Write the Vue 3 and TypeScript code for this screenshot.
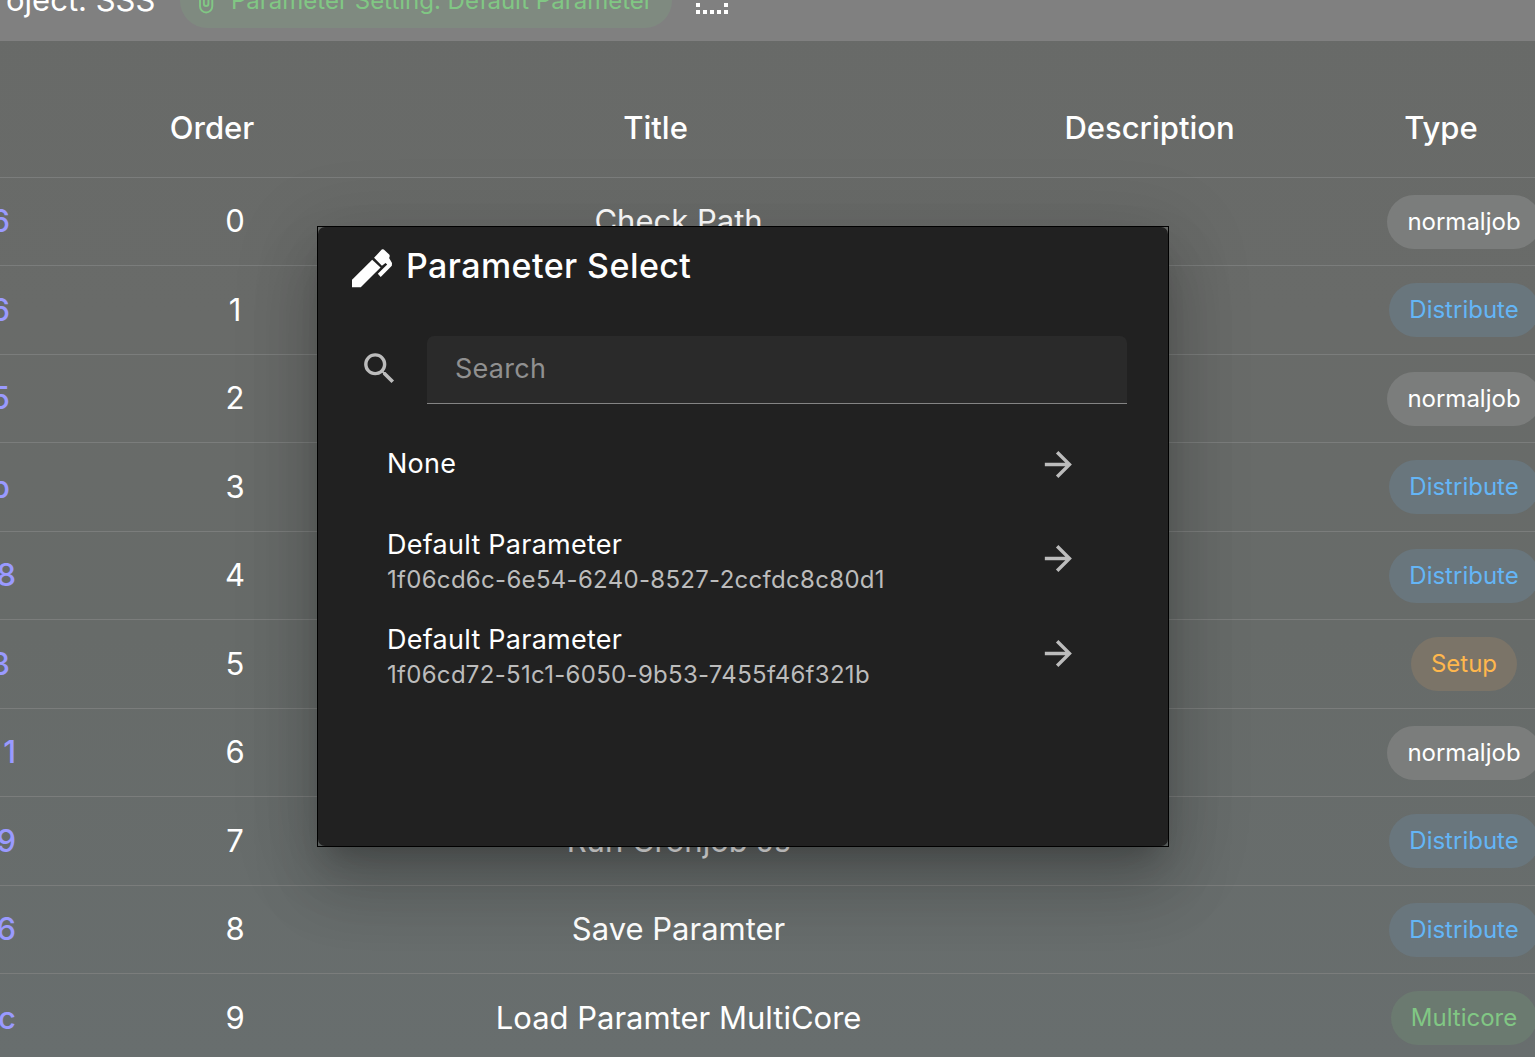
<script setup lang="ts">
import { ref } from 'vue'

type Kind = 'normaljob' | 'Distribute' | 'Setup' | 'Multicore'

interface Job {
  id: string
  long?: boolean
  title: string
  kind: Kind
}

interface Parameter {
  title: string
  uuid?: string
}

const jobs: Job[] = [
  { id: '6', title: 'Check Path', kind: 'normaljob' },
  { id: '6', title: '', kind: 'Distribute' },
  { id: '5', title: '', kind: 'normaljob' },
  { id: 'b', title: '', kind: 'Distribute' },
  { id: '8', long: true, title: '', kind: 'Distribute' },
  { id: '3', title: '', kind: 'Setup' },
  { id: '1', long: true, title: '', kind: 'normaljob' },
  { id: '9', long: true, title: 'Run Cronjob Js', kind: 'Distribute' },
  { id: '6', long: true, title: 'Save Paramter', kind: 'Distribute' },
  { id: 'c', long: true, title: 'Load Paramter MultiCore', kind: 'Multicore' },
]

const parameters: Parameter[] = [
  { title: 'None' },
  { title: 'Default Parameter', uuid: '1f06cd6c-6e54-6240-8527-2ccfdc8c80d1' },
  { title: 'Default Parameter', uuid: '1f06cd72-51c1-6050-9b53-7455f46f321b' },
]

const search = ref('')
</script>

<template>
  <div class="page">
    <header class="toolbar">
      <h1 class="project">oject: SSS</h1>
      <button class="setting" type="button">
        <svg class="clip" viewBox="0 0 24 24" aria-hidden="true">
          <path d="M7.500 18A5.500 5.500 0 0 1 2 12.500 5.500 5.500 0 0 1 7.500 7H18a4 4 0 0 1 4 4 4 4 0 0 1-4 4H9.500A2.500 2.500 0 0 1 7 12.500 2.500 2.500 0 0 1 9.500 10H17v1.500H9.500a1 1 0 0 0-1 1 1 1 0 0 0 1 1H18a2.500 2.500 0 0 0 2.500-2.500A2.500 2.500 0 0 0 18 8.500H7.500a4 4 0 0 0-4 4 4 4 0 0 0 4 4H17V18z" transform="rotate(-90 12 12)" />
        </svg>
        <span>Parameter Setting: Default Parameter</span>
      </button>
      <button class="select-all" type="button" aria-label="Selection">
        <svg viewBox="0 0 32 32" aria-hidden="true">
          <path
            d="M0 28H32M2 30V2M30 30V2M0 4H32"
            fill="none"
            stroke="currentColor"
            stroke-width="4"
            stroke-dasharray="4 3"
          />
        </svg>
      </button>
    </header>

    <table class="jobs">
      <colgroup>
        <col class="col-id" />
        <col class="col-order" />
        <col class="col-title" />
        <col />
        <col class="col-type" />
      </colgroup>
      <thead>
        <tr>
          <td></td>
          <th scope="col">Order</th>
          <th scope="col">Title</th>
          <th scope="col">Description</th>
          <th scope="col">Type</th>
        </tr>
      </thead>
      <tbody>
        <tr v-for="(job, index) in jobs" :key="index">
          <td><a class="id" :class="{ long: job.long }" href="#">{{ job.id }}</a></td>
          <td>{{ index }}</td>
          <td>{{ job.title }}</td>
          <td></td>
          <td class="type"><span class="chip" :class="job.kind.toLowerCase()">{{ job.kind }}</span></td>
        </tr>
      </tbody>
    </table>

    <div class="overlay">
      <div class="frame">
        <section class="dialog" role="dialog" aria-labelledby="dialog-title">
          <h2 id="dialog-title" class="heading">
            <svg viewBox="0 0 24 24" aria-hidden="true">
              <path d="M13.500 6.900L18 2.100Q18.600 1.600 19.200 2.100L22.500 5.100Q22.900 6 22.300 7L24 9.900 23.900 11.600 17.400 18.100 15.700 16.300 21.200 10.800 20.200 9.900 18.100 11.500z" />
              <path d="M12.400 8L17.300 12.600 5.700 24.100H.6V19.800z" />
            </svg>
            <span>Parameter Select</span>
          </h2>
          <div class="search">
            <label for="search" aria-label="Search">
              <svg viewBox="0 0 24 24" aria-hidden="true">
                <path d="M9.500 3A6.500 6.500 0 0 1 16 9.500c0 1.610-.59 3.090-1.560 4.230l.27.270h.79l5 5-1.500 1.500-5-5v-.79l-.27-.27A6.516 6.516 0 0 1 9.500 16 6.500 6.500 0 0 1 3 9.500 6.500 6.500 0 0 1 9.500 3m0 2C7 5 5 7 5 9.500S7 14 9.500 14 14 12 14 9.500 12 5 9.500 5z" />
              </svg>
            </label>
            <input id="search" v-model="search" type="text" placeholder="Search" />
          </div>
          <ul class="list">
            <li v-for="(item, index) in parameters" :key="index">
              <button class="item" :class="{ double: item.uuid }" type="button">
                <span class="labels">
                  <span class="name">{{ item.title }}</span>
                  <span v-if="item.uuid" class="uuid">{{ item.uuid }}</span>
                </span>
                <svg viewBox="0 0 24 24" aria-hidden="true">
                  <path d="M4 11v2h12l-5.500 5.500 1.420 1.420L19.840 12l-7.920-7.920L10.500 5.500 16 11z" />
                </svg>
              </button>
            </li>
          </ul>
        </section>
      </div>
    </div>
  </div>
</template>

<style>
body {
  background: #696b69;
}
</style>

<style scoped>
* {
  box-sizing: border-box;
}

button,
input {
  border: 0;
  background: none;
  color: inherit;
  font: inherit;
}

svg {
  display: block;
  flex: none;
  fill: currentColor;
}

.page {
  position: relative;
  height: 100vh;
  overflow: hidden;
  color: #fff;
  font-family: Inter, "Liberation Sans", sans-serif;
  background: linear-gradient(#686a68, #696b69 30%, #676b69 60%, #686e6e);
}

.toolbar {
  display: flex;
  align-items: center;
  height: 82px;
  margin-top: -41px;
  padding-left: 6px;
  background: #808080;
}

.project {
  width: 174px;
  margin: 0;
  font-size: 31px;
  font-weight: 400;
  line-height: 42px;
  white-space: nowrap;
}

.setting {
  display: flex;
  align-items: center;
  gap: 10px;
  height: 55px;
  padding: 0 19px 0 10px;
  border-radius: 28px;
  background: #7f8a80;
  color: #81c784;
  font-size: 24px;
  white-space: nowrap;
}

.clip {
  width: 31px;
  height: 31px;
}

.select-all {
  margin-left: 24px;
  padding: 0;
}

.select-all svg {
  width: 32px;
  height: 32px;
}

.jobs {
  width: calc(100% + 32px);
  table-layout: fixed;
  border-collapse: separate;
  border-spacing: 0;
  font-size: 31px;
  text-align: center;
}

.col-id {
  width: 97px;
}

.col-order {
  width: 276px;
}

.col-title {
  width: 39%;
}

.col-type {
  width: 206px;
}

.jobs th,
.jobs td {
  padding: 0 0 2px;
  border-bottom: 1px solid #7b7d7c;
}

.jobs thead tr {
  height: 137px;
}

.jobs th {
  padding: 36px 46px 0 0;
  font-weight: 500;
  vertical-align: middle;
}

.jobs .type {
  padding: 0;
}

.jobs tbody tr {
  height: 88px;
}

.jobs tbody tr:nth-child(even) {
  height: 89px;
}

.id {
  display: flex;
  justify-content: flex-end;
  width: 10px;
  color: #9a9aff;
  font-weight: 500;
  text-decoration: none;
}

.id.long {
  width: 16px;
}

.chip {
  display: inline-block;
  padding: 0 20px;
  border-radius: 27px;
  font-size: 24px;
  line-height: 54px;
  vertical-align: middle;
}

.normaljob {
  background: #7b7d7c;
}

.distribute {
  background: #69767d;
  color: #64b5f6;
}

.setup {
  background: #7b7468;
  color: #ffb74d;
}

.multicore {
  background: #6b7a70;
  color: #81c784;
}

.overlay {
  position: absolute;
  inset: 0;
  display: flex;
  align-items: flex-start;
  justify-content: center;
  padding: 226px 49px 0 0;
}

.frame {
  width: 852px;
  border: 1px solid #000;
}

.dialog {
  min-height: 619px;
  padding: 18px 41px 0 33px;
  border-radius: 7px;
  background: #212121;
  box-shadow: 0 19px 26px -12px rgba(0, 0, 0, 0.2), 0 41px 65px 5px rgba(0, 0, 0, 0.14),
    0 15px 78px 14px rgba(0, 0, 0, 0.12);
}

.heading {
  display: flex;
  align-items: center;
  gap: 14px;
  margin: 0;
  font-size: 34px;
  font-weight: 500;
  line-height: 42px;
  letter-spacing: 0.0125em;
}

.heading svg {
  width: 41px;
  height: 41px;
  overflow: visible;
}

.search {
  display: flex;
  align-items: center;
  gap: 27px;
  margin-top: 49px;
  padding-left: 8px;
}

.search label {
  padding-bottom: 4px;
  color: #bcbcbc;
}

.search svg,
.item svg {
  width: 41px;
  height: 41px;
}

.search input {
  flex: 1;
  min-width: 0;
  height: 68px;
  padding: 0 28px 2px;
  border-bottom: 1px solid #848484;
  border-radius: 7px 7px 0 0;
  background: #2a2a2a;
  font-size: 27px;
  letter-spacing: 0.0094em;
  outline: 0;
}

.search input::placeholder {
  color: #909090;
  opacity: 1;
}

.list {
  margin: 0;
  padding: 19px 48px 0 8px;
  list-style: none;
}

.item {
  display: flex;
  align-items: center;
  justify-content: space-between;
  width: 100%;
  height: 82px;
  margin-bottom: 6px;
  padding: 0 0 0 28px;
  text-align: left;
}

.item.double {
  height: 95px;
  margin-bottom: 0;
}

.labels {
  display: flex;
  flex-direction: column;
}

.double .labels {
  padding-top: 5px;
}

.name {
  font-size: 27px;
  line-height: 38px;
  letter-spacing: 0.0094em;
}

.uuid {
  color: #bcbcbc;
  font-size: 24px;
  line-height: 32px;
  letter-spacing: 0.0125em;
}

.item svg {
  color: #bcbcbc;
}
</style>
